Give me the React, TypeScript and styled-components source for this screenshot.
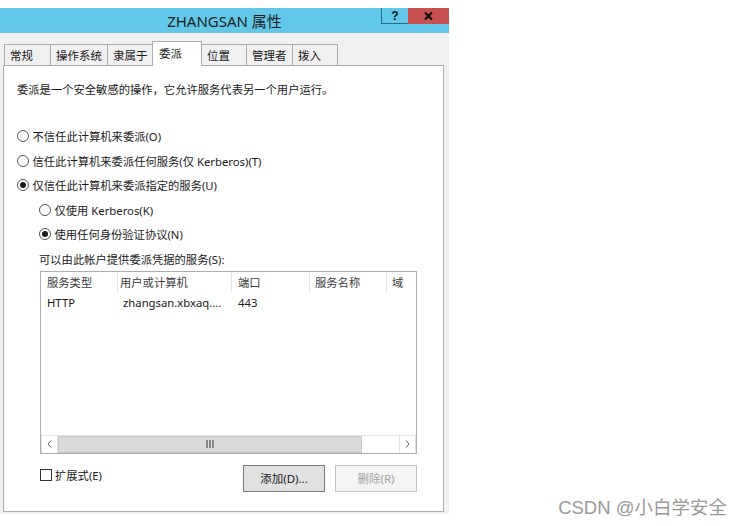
import styled, { createGlobalStyle } from "styled-components";

const GlobalStyle = createGlobalStyle`
  html, body {
    margin: 0;
    padding: 0;
    background: #fff;
  }
  body {
    font-family: "Noto Sans", "Noto Sans CJK SC", sans-serif;
    font-size: 11.3px;
    color: #1a1a1a;
  }
  #root {
    width: 742px;
    height: 526px;
    position: relative;
    overflow: hidden;
  }
`;

const Page = styled.div`
  padding-top: 8px;
`;

const Window = styled.div`
  width: 449px;
  height: 506px;
  background: #f0f0f0;
  display: flex;
  flex-direction: column;
`;

const TitleBar = styled.div`
  height: 25px;
  background: #62c8ea;
  position: relative;
  display: flex;
  align-items: center;
  justify-content: center;
  font-family: "Noto Sans", "Noto Sans CJK SC", sans-serif;
  font-size: 15px;
  color: #1e1e1e;
`;

const CaptionButtons = styled.div`
  position: absolute;
  top: 0;
  right: 0;
  display: flex;
`;

const HelpButton = styled.div`
  width: 27px;
  height: 16px;
  box-sizing: border-box;
  border-left: 1px solid #2e6a80;
  border-bottom: 1px solid #2e6a80;
  display: flex;
  align-items: center;
  justify-content: center;
  font-family: "Liberation Sans", sans-serif;
  font-weight: 700;
  font-size: 12px;
  color: #111;
`;

const CloseButton = styled.div`
  width: 41px;
  height: 16px;
  background: #c75050;
  display: flex;
  align-items: center;
  justify-content: center;
`;

const Body = styled.div`
  flex: 1;
  padding: 9px 5px 0 3px;
  display: flex;
  flex-direction: column;
`;

const TabStrip = styled.div`
  display: flex;
  align-items: flex-end;
  height: 24px;
  margin-bottom: -1px;
  padding-left: 1px;
  position: relative;
  z-index: 1;
`;

const Tab = styled.div<{ $w: number; $active?: boolean }>`
  width: ${(p) => p.$w + 1}px;
  height: ${(p) => (p.$active ? 25 : 22)}px;
  box-sizing: border-box;
  margin-right: -1px;
  border: 1px solid #acacac;
  border-bottom: ${(p) => (p.$active ? "none" : "1px solid #acacac")};
  background: ${(p) => (p.$active ? "#fff" : "#f0f0f0")};
  padding-left: ${(p) => (p.$active ? 6 : 5)}px;
  display: flex;
  align-items: ${(p) => (p.$active ? "flex-start" : "center")};
  padding-top: ${(p) => (p.$active ? 3 : 0)}px;
  font-size: 11.5px;
  position: relative;
  z-index: ${(p) => (p.$active ? 2 : 1)};
`;

const Panel = styled.div`
  height: 447px;
  box-sizing: border-box;
  background: #fff;
  border: 1px solid #acacac;
  padding-left: 13px;
  display: flex;
  flex-direction: column;
`;

const Intro = styled.div`
  margin-top: 11px;
  height: 24px;
  display: flex;
  align-items: center;
`;

const Options = styled.div`
  margin-top: 22.75px;
  display: flex;
  flex-direction: column;
`;

const Row = styled.div<{ $indent?: number }>`
  height: 24.5px;
  display: flex;
  align-items: center;
  gap: 3.5px;
  padding-left: ${(p) => p.$indent ?? 0}px;
`;

const Radio = styled.span<{ $checked?: boolean }>`
  width: 12px;
  height: 12px;
  box-sizing: border-box;
  border-radius: 50%;
  border: 1px solid #555;
  background: #fff;
  display: flex;
  align-items: center;
  justify-content: center;
  &::after {
    content: "";
    width: 6px;
    height: 6px;
    border-radius: 50%;
    background: #1a1a1a;
    display: ${(p) => (p.$checked ? "block" : "none")};
  }
`;

const ListBox = styled.div`
  margin-left: 23px;
  width: 377px;
  height: 183px;
  box-sizing: border-box;
  border: 1px solid #adadad;
  display: flex;
  flex-direction: column;
  overflow: hidden;
`;

const HeaderRow = styled.div`
  height: 20px;
  display: flex;
  flex: none;
`;

const HeaderCell = styled.div<{ $w: number; $pad?: number }>`
  width: ${(p) => p.$w}px;
  flex: none;
  box-sizing: border-box;
  border-right: 1px solid #e5e5e5;
  padding-left: ${(p) => p.$pad ?? 5}px;
  display: flex;
  align-items: center;
  color: #3a3a3a;
  white-space: nowrap;
`;

const DataRow = styled.div`
  height: 21px;
  display: flex;
  flex: none;
`;

const Cell = styled.div<{ $w: number; $pad?: number }>`
  width: ${(p) => p.$w}px;
  flex: none;
  box-sizing: border-box;
  padding-left: ${(p) => p.$pad ?? 6}px;
  display: flex;
  align-items: center;
  white-space: nowrap;
  font-size: 11.3px;
`;

const Filler = styled.div`
  flex: 1;
`;

const ScrollBar = styled.div`
  height: 17px;
  flex: none;
  display: flex;
  background: #fff;
  border-top: 1px solid #e3e3e3;
`;

const ArrowBox = styled.div`
  width: 17px;
  flex: none;
  box-sizing: border-box;
  border-left: 1px solid #e3e3e3;
  border-right: 1px solid #e3e3e3;
  display: flex;
  align-items: center;
  justify-content: center;
  background: #fff;
`;

const Thumb = styled.div`
  width: 304px;
  flex: none;
  box-sizing: border-box;
  background: #dadada;
  border: 1px solid #c6c6c6;
  display: flex;
  align-items: center;
  justify-content: center;
`;

const Track = styled.div`
  flex: 1;
  background: #fff;
`;

const BottomRow = styled.div`
  margin-top: 11px;
  margin-left: 23px;
  width: 377px;
  height: 27px;
  display: flex;
  align-items: center;
`;

const CheckGroup = styled.div`
  flex: 1;
  display: flex;
  align-items: center;
  gap: 3px;
  margin-top: -6px;
`;

const Checkbox = styled.span`
  width: 12px;
  height: 12px;
  box-sizing: border-box;
  border: 1px solid #333;
  background: #fff;
`;

const Button = styled.div<{ $disabled?: boolean }>`
  width: 82px;
  height: 27px;
  box-sizing: border-box;
  border: 1px solid ${(p) => (p.$disabled ? "#c4c4c4" : "#7a7a7a")};
  background: ${(p) => (p.$disabled ? "#f4f4f4" : "#e1e1e1")};
  color: ${(p) => (p.$disabled ? "#a0a0a0" : "#1a1a1a")};
  display: flex;
  align-items: center;
  justify-content: center;
  font-size: 11.5px;
  & + & {
    margin-left: 10px;
  }
`;

const Watermark = styled.div`
  position: absolute;
  right: 15px;
  bottom: 7px;
  font-family: "Liberation Sans", "Noto Sans CJK SC", sans-serif;
  font-size: 18.5px;
  color: #9a9a9a;
`;

const tabs: [string, number][] = [
  ["常规", 46],
  ["操作系统", 57],
  ["隶属于", 45],
  ["委派", 49],
  ["位置", 45],
  ["管理者", 46],
  ["拨入", 45],
];

const cols: [string, number, number][] = [
  ["服务类型", 77, 6],
  ["用户或计算机", 114, 2],
  ["端口", 78, 6],
  ["服务名称", 77, 5],
  ["域", 60, 5],
];

function Chevron({ left }: { left?: boolean }) {
  return (
    <svg width="5" height="8" viewBox="0 0 5 8">
      <path
        d={left ? "M4 0.5 L1 4 L4 7.5" : "M1 0.5 L4 4 L1 7.5"}
        fill="none"
        stroke="#606060"
        strokeWidth="1"
      />
    </svg>
  );
}

function App() {
  return (
    <>
      <GlobalStyle />
      <Page>
        <Window>
          <TitleBar>
            ZHANGSAN 属性
            <CaptionButtons>
              <HelpButton>?</HelpButton>
              <CloseButton>
                <svg width="9" height="8" viewBox="0 0 9 8">
                  <path d="M1 0.5 L8 7.5 M8 0.5 L1 7.5" stroke="#111" strokeWidth="2.2" />
                </svg>
              </CloseButton>
            </CaptionButtons>
          </TitleBar>
          <Body>
            <TabStrip>
              {tabs.map(([t, w]) => (
                <Tab key={t} $w={w} $active={t === "委派"}>
                  {t}
                </Tab>
              ))}
            </TabStrip>
            <Panel>
              <Intro>委派是一个安全敏感的操作，它允许服务代表另一个用户运行。</Intro>
              <Options>
                <Row>
                  <Radio />
                  不信任此计算机来委派(O)
                </Row>
                <Row>
                  <Radio />
                  信任此计算机来委派任何服务(仅 Kerberos)(T)
                </Row>
                <Row>
                  <Radio $checked />
                  仅信任此计算机来委派指定的服务(U)
                </Row>
                <Row $indent={22}>
                  <Radio />
                  仅使用 Kerberos(K)
                </Row>
                <Row $indent={22}>
                  <Radio $checked />
                  使用任何身份验证协议(N)
                </Row>
                <Row $indent={22}>可以由此帐户提供委派凭据的服务(S):</Row>
              </Options>
              <ListBox>
                <HeaderRow>
                  {cols.map(([c, w, pad]) => (
                    <HeaderCell key={c} $w={w} $pad={pad}>
                      {c}
                    </HeaderCell>
                  ))}
                </HeaderRow>
                <DataRow>
                  <Cell $w={77} $pad={6}>HTTP</Cell>
                  <Cell $w={114} $pad={5}>zhangsan.xbxaq....</Cell>
                  <Cell $w={78} $pad={6}>443</Cell>
                </DataRow>
                <Filler />
                <ScrollBar>
                  <ArrowBox>
                    <Chevron left />
                  </ArrowBox>
                  <Thumb>
                    <svg width="8" height="8" viewBox="0 0 8 8">
                      <path d="M1 0 V8 M4 0 V8 M7 0 V8" stroke="#666" strokeWidth="1.4" />
                    </svg>
                  </Thumb>
                  <Track />
                  <ArrowBox>
                    <Chevron />
                  </ArrowBox>
                </ScrollBar>
              </ListBox>
              <BottomRow>
                <CheckGroup>
                  <Checkbox />
                  扩展式(E)
                </CheckGroup>
                <Button>添加(D)...</Button>
                <Button $disabled>删除(R)</Button>
              </BottomRow>
            </Panel>
          </Body>
        </Window>
        <Watermark>CSDN @小白学安全</Watermark>
      </Page>
    </>
  );
}

export default App;
